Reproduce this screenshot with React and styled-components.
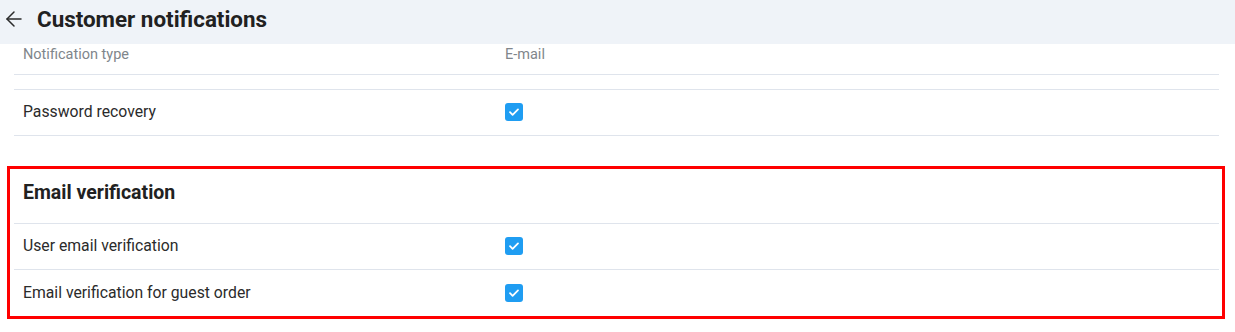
import styled, { createGlobalStyle } from "styled-components";
import { ArrowLeft } from "lucide-react";

const GlobalStyle = createGlobalStyle`
  body {
    margin: 0;
    background: #ffffff;
    font-family: Roboto, "Liberation Sans", Arial, sans-serif;
    color: #2b2b2b;
  }
`;

const Header = styled.header`
  height: 44px;
  box-sizing: border-box;
  padding: 0 0 6px 2px;
  background: #eff3f8;
  display: flex;
  align-items: center;
  gap: 11px;
  color: #2b2b2b;

  h1 {
    margin: 0;
    font-size: 22.4px;
    font-weight: 700;
    color: #212121;
  }
`;

const Content = styled.main`
  padding: 0 16px 0 14px;
`;

const Row = styled.div`
  display: grid;
  grid-template-columns: 491px 1fr;
  align-items: ${(p) => (p.$head ? "start" : "center")};
  padding-top: ${(p) => (p.$head ? "2px" : "0")};
  padding-bottom: ${(p) => (p.$head ? "0" : "1px")};
  height: ${(p) => p.$h}px;
  box-sizing: border-box;
  border-bottom: ${(p) => (p.$last ? "none" : "1px solid #dfe4ec")};
  font-size: ${(p) => (p.$head ? "14.5px" : "15.75px")};
  line-height: 18px;
  color: ${(p) => (p.$head ? "#80868b" : "#2b2b2b")};

  & > :first-child {
    padding-left: 9px;
  }
`;

const Highlight = styled.section`
  margin: 30px -6px 0 -7px;
  border: 3px solid #ff0000;
  padding: 0 3px 0 4px;
`;

const SectionTitle = styled.h2`
  margin: 0;
  height: 55px;
  box-sizing: border-box;
  padding: 13px 0 0 9px;
  font-size: 19.5px;
  line-height: 22px;
  font-weight: 700;
  color: #212121;
  border-bottom: 1px solid #dfe4ec;
`;

const Box = styled.span`
  display: inline-flex;
  width: 18px;
  height: 18px;
  border-radius: 3px;
  background: #1f9df2;
  align-items: center;
  justify-content: center;
`;

const Check = () => (
  <Box>
    <svg width="14" height="14" viewBox="0 0 14 14" fill="none">
      <path d="M3 7.2l2.6 2.6L11 4.4" stroke="#fff" strokeWidth="1.8" strokeLinecap="round" strokeLinejoin="round" />
    </svg>
  </Box>
);

const App = () => {
  return (
    <>
      <GlobalStyle />
      <Header>
        <ArrowLeft size={24} strokeWidth={1.5} />
        <h1>Customer notifications</h1>
      </Header>
      <Content>
        <Row $head $h={31}>
          <span>Notification type</span>
          <span>E-mail</span>
        </Row>
        <Row $h={15} />
        <Row $h={46}>
          <span>Password recovery</span>
          <Check />
        </Row>
        <Highlight>
          <SectionTitle>Email verification</SectionTitle>
          <Row $h={46}>
            <span>User email verification</span>
            <Check />
          </Row>
          <Row $h={46} $last>
            <span>Email verification for guest order</span>
            <Check />
          </Row>
        </Highlight>
      </Content>
    </>
  );
};

export default App;
